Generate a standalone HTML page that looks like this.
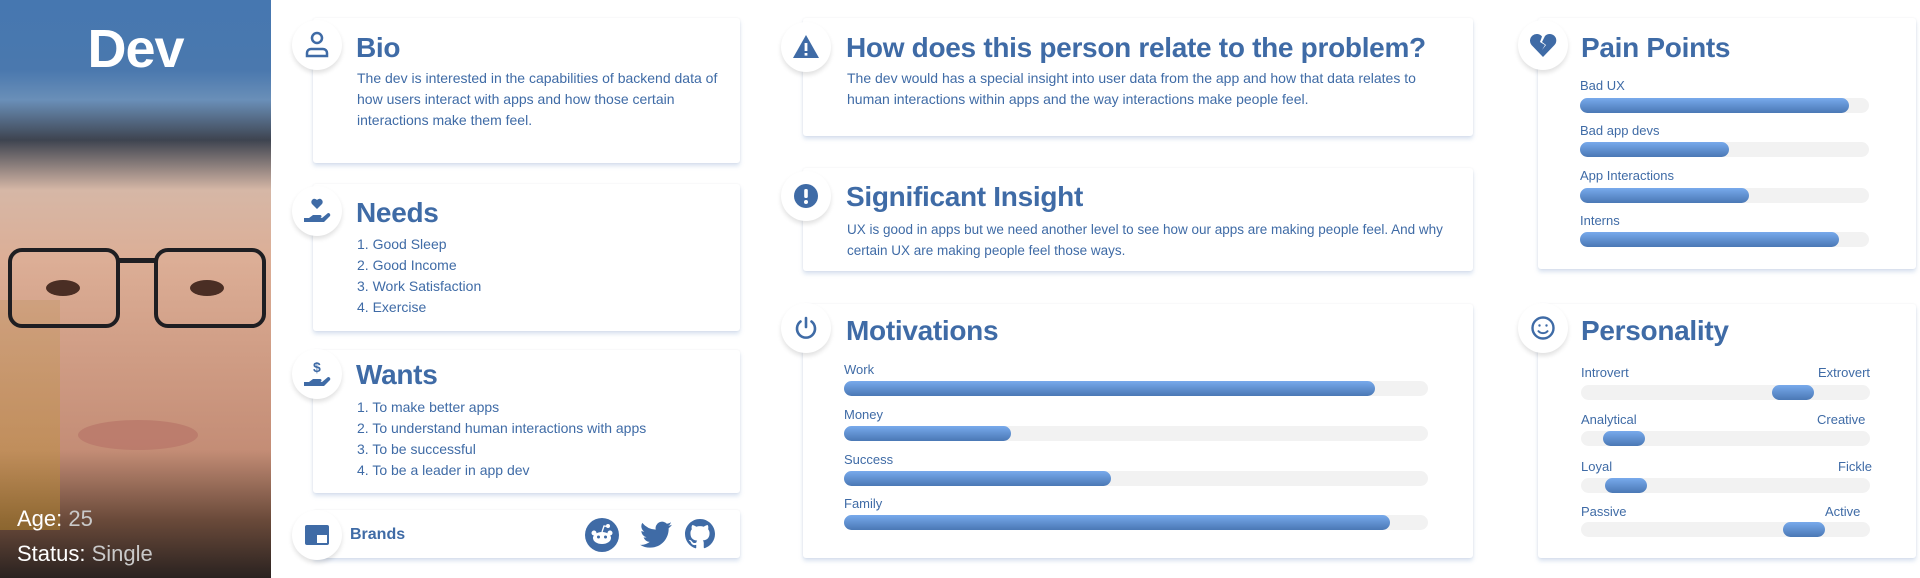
<!DOCTYPE html>
<html><head><meta charset="utf-8"><style>
*{margin:0;padding:0;box-sizing:border-box}
body{width:1920px;height:578px;background:#fff;position:relative;overflow:hidden;font-family:"Liberation Sans",sans-serif;color:#3f6ba6}
.abs{position:absolute}
.card{position:absolute;background:#fff;box-shadow:0 3px 4px rgba(120,150,200,.28),0 0 2px rgba(0,0,0,.06);border-radius:3px}
.ic{position:absolute;width:50px;height:50px;border-radius:50%;background:#fff;box-shadow:0 3px 5px rgba(0,0,0,.12);display:flex;align-items:center;justify-content:center}
.t{position:absolute;font-weight:bold;font-size:28px;color:#3f6ba6;letter-spacing:-.3px;line-height:30px}
.p{position:absolute;font-size:14px;line-height:21px;color:#3f6ba6;white-space:nowrap}
.lbl{position:absolute;font-size:13px;color:#3f6ba6;line-height:14px}
.tr{position:absolute;height:15px;border-radius:8px;background:#f2f2f2}
.fl{position:absolute;height:15px;border-radius:8px;background:linear-gradient(#78aaec,#4a78b5);top:0}
</style></head><body>
<div class="abs" style="left:0;top:0;width:271px;height:578px;overflow:hidden;background:linear-gradient(180deg,#4677b0 0px,#4a78ae 70px,#6a8fb8 100px,#3e4450 140px,#d6b7a6 190px,#dcae96 260px,#cf9c84 360px,#c48d76 450px,#6a4a3a 520px,#2a2220 578px)">
  <div class="abs" style="left:0;top:300px;width:60px;height:230px;background:linear-gradient(#c69a6e,#b8892a);opacity:.5"></div>
  <div class="abs" style="left:8px;top:248px;width:112px;height:80px;border:4px solid #1e1e22;border-radius:14px"></div>
  <div class="abs" style="left:154px;top:248px;width:112px;height:80px;border:4px solid #1e1e22;border-radius:14px"></div>
  <div class="abs" style="left:118px;top:258px;width:38px;height:5px;background:#1e1e22"></div>
  <div class="abs" style="left:46px;top:280px;width:34px;height:16px;border-radius:50%;background:#4a2e24"></div>
  <div class="abs" style="left:190px;top:280px;width:34px;height:16px;border-radius:50%;background:#4a2e24"></div>
  <div class="abs" style="left:78px;top:420px;width:120px;height:30px;border-radius:50%;background:#b9786a;opacity:.8"></div>
  <div class="abs" style="left:0;top:18px;width:271px;text-align:center;color:#fff;font-weight:bold;font-size:54px;letter-spacing:-1px">Dev</div>
  <div class="abs" style="left:17px;top:506px;color:#fff;font-size:22px">Age: <span style="color:#c9c9c9">25</span></div>
  <div class="abs" style="left:17px;top:541px;color:#fff;font-size:22px">Status: <span style="color:#c9c9c9">Single</span></div>
</div>

<div class="card" style="left:313px;top:18px;width:427px;height:145px"></div>
<div class="ic" style="left:292px;top:20px"><svg width="26" height="28" viewBox="0 0 26 28" fill="none" stroke="#3f6ba6" stroke-width="2.5"><circle cx="13" cy="7" r="5"/><path d="M3 25v-3a4 4 0 0 1 4-4h12a4 4 0 0 1 4 4v3z"/></svg></div>
<div class="t" style="left:356px;top:33px">Bio</div>
<div class="p" style="left:357px;top:68px">The dev is interested in the capabilities of backend data of<br>how users interact with apps and how those certain<br>interactions make them feel.</div>

<div class="card" style="left:313px;top:184px;width:427px;height:147px"></div>
<div class="ic" style="left:292px;top:186px"><svg width="28" height="28" viewBox="0 0 28 28" fill="#3f6ba6"><path d="M14 12 9 7a3 3 0 0 1 5-4 3 3 0 0 1 5 4z"/><path d="M1 21h5l4-3h7a1.5 1.5 0 0 1 0 3h-5h7l6-5a2 2 0 0 1 2 3l-6 6H1z"/></svg></div>
<div class="t" style="left:356px;top:198px">Needs</div>
<div class="p" style="left:357px;top:234px">1. Good Sleep<br>2. Good Income<br>3. Work Satisfaction<br>4. Exercise</div>

<div class="card" style="left:313px;top:350px;width:427px;height:143px"></div>
<div class="ic" style="left:292px;top:349px"><svg width="28" height="30" viewBox="0 0 28 30" fill="#3f6ba6"><text x="10" y="13" font-size="14" font-weight="bold" font-family="Liberation Sans">$</text><path d="M1 23h5l4-3h7a1.5 1.5 0 0 1 0 3h-5h7l6-5a2 2 0 0 1 2 3l-6 6H1z"/></svg></div>
<div class="t" style="left:356px;top:360px">Wants</div>
<div class="p" style="left:357px;top:397px">1. To make better apps<br>2. To understand human interactions with apps<br>3. To be successful<br>4. To be a leader in app dev</div>

<div class="card" style="left:313px;top:510px;width:427px;height:48px"></div>
<div class="ic" style="left:292px;top:510px"><svg width="26" height="24" viewBox="0 0 26 24"><rect x="1" y="2" width="24" height="20" rx="2" fill="#3f6ba6"/><rect x="13" y="12" width="10" height="8" fill="#fff"/></svg></div>
<div class="abs" style="left:350px;top:526px;font-weight:bold;font-size:16px">Brands</div>
<svg class="abs" style="left:585px;top:518px" width="34" height="34" viewBox="0 0 34 34"><circle cx="17" cy="17" r="17" fill="#3f6ba6"/><ellipse cx="17" cy="20" rx="9" ry="6" fill="#fff"/><circle cx="9" cy="15" r="2.5" fill="#fff"/><circle cx="25" cy="15" r="2.5" fill="#fff"/><circle cx="23" cy="8" r="2" fill="#fff"/><path d="M17 14l2-6 4 0.5" stroke="#fff" fill="none" stroke-width="1.3"/><circle cx="13.5" cy="19" r="1.5" fill="#3f6ba6"/><circle cx="20.5" cy="19" r="1.5" fill="#3f6ba6"/></svg>
<svg class="abs" style="left:640px;top:521px" width="32" height="28" viewBox="0 0 24 20"><path fill="#3f6ba6" d="M24 2.3a9.8 9.8 0 0 1-2.8.8A4.9 4.9 0 0 0 23.3.4a9.9 9.9 0 0 1-3.1 1.2A4.9 4.9 0 0 0 11.8 6 14 14 0 0 1 1.7.9a4.9 4.9 0 0 0 1.5 6.6A4.9 4.9 0 0 1 1 6.9a4.9 4.9 0 0 0 3.9 4.8 4.9 4.9 0 0 1-2.2.1 4.9 4.9 0 0 0 4.6 3.4A9.9 9.9 0 0 1 0 17.3a14 14 0 0 0 7.5 2.2c9.1 0 14-7.5 14-14v-.6A10 10 0 0 0 24 2.3z"/></svg>
<svg class="abs" style="left:685px;top:519px" width="30" height="30" viewBox="0 0 16 16"><path fill="#3f6ba6" d="M8 0C3.6 0 0 3.6 0 8c0 3.5 2.3 6.5 5.5 7.6.4.1.5-.2.5-.4v-1.4c-2.2.5-2.7-1-2.7-1-.4-.9-.9-1.2-.9-1.2-.7-.5.1-.5.1-.5.8.1 1.2.8 1.2.8.7 1.2 1.9.9 2.3.7.1-.5.3-.9.5-1.1-1.8-.2-3.6-.9-3.6-4 0-.9.3-1.6.8-2.1-.1-.2-.4-1 .1-2.1 0 0 .7-.2 2.2.8a7.5 7.5 0 0 1 4 0c1.5-1 2.2-.8 2.2-.8.4 1.1.2 1.9.1 2.1.5.6.8 1.3.8 2.1 0 3.1-1.9 3.7-3.6 3.9.3.3.5.8.5 1.5v2.2c0 .2.1.5.6.4A8 8 0 0 0 16 8c0-4.4-3.6-8-8-8z"/></svg>

<div class="card" style="left:803px;top:18px;width:670px;height:118px"></div>
<div class="ic" style="left:781px;top:22px"><svg width="28" height="26" viewBox="0 0 28 26"><path d="M14 1L27 24H1z" fill="#3f6ba6"/><rect x="12.6" y="9" width="2.8" height="8" fill="#fff"/><rect x="12.6" y="19" width="2.8" height="2.6" fill="#fff"/></svg></div>
<div class="t" style="left:846px;top:33px">How does this person relate to the problem?</div>
<div class="p" style="left:847px;top:68px">The dev would has a special insight into user data from the app and how that data relates to<br>human interactions within apps and the way interactions make people feel.</div>

<div class="card" style="left:803px;top:168px;width:670px;height:103px"></div>
<div class="ic" style="left:781px;top:171px"><svg width="26" height="26" viewBox="0 0 26 26"><circle cx="13" cy="13" r="12" fill="#3f6ba6"/><rect x="11.2" y="6" width="3.6" height="9" rx="1.5" fill="#fff"/><circle cx="13" cy="19" r="2" fill="#fff"/></svg></div>
<div class="t" style="left:846px;top:182px">Significant Insight</div>
<div class="p" style="left:847px;top:219px;font-size:13.5px">UX is good in apps but we need another level to see how our apps are making people feel. And why<br>certain UX are making people feel those ways.</div>

<div class="card" style="left:803px;top:304px;width:670px;height:254px"></div>
<div class="ic" style="left:781px;top:303px"><svg width="26" height="26" viewBox="0 0 26 26" fill="none" stroke="#3f6ba6" stroke-width="2.6" stroke-linecap="round"><path d="M13 3v9"/><path d="M7.5 6.5a9 9 0 1 0 11 0"/></svg></div>
<div class="t" style="left:846px;top:316px">Motivations</div>
<div class="lbl" style="left:844px;top:363px">Work</div>
<div class="tr" style="left:844px;top:381px;width:584px"><div class="fl" style="width:531px"></div></div>
<div class="lbl" style="left:844px;top:408px">Money</div>
<div class="tr" style="left:844px;top:426px;width:584px"><div class="fl" style="width:167px"></div></div>
<div class="lbl" style="left:844px;top:453px">Success</div>
<div class="tr" style="left:844px;top:471px;width:584px"><div class="fl" style="width:267px"></div></div>
<div class="lbl" style="left:844px;top:497px">Family</div>
<div class="tr" style="left:844px;top:515px;width:584px"><div class="fl" style="width:546px"></div></div>

<div class="card" style="left:1538px;top:18px;width:378px;height:251px"></div>
<div class="ic" style="left:1518px;top:20px"><svg width="28" height="26" viewBox="0 0 28 26"><path d="M14 25L2.5 13A6.5 6.5 0 0 1 13 4.5L11 10l5 3-3 5 4-5-4-3 3-6A6.5 6.5 0 0 1 25.5 13z" fill="#3f6ba6"/></svg></div>
<div class="t" style="left:1581px;top:33px">Pain Points</div>
<div class="lbl" style="left:1580px;top:79px">Bad UX</div>
<div class="tr" style="left:1580px;top:98px;width:289px"><div class="fl" style="width:269px"></div></div>
<div class="lbl" style="left:1580px;top:124px">Bad app devs</div>
<div class="tr" style="left:1580px;top:142px;width:289px"><div class="fl" style="width:149px"></div></div>
<div class="lbl" style="left:1580px;top:169px">App Interactions</div>
<div class="tr" style="left:1580px;top:188px;width:289px"><div class="fl" style="width:169px"></div></div>
<div class="lbl" style="left:1580px;top:214px">Interns</div>
<div class="tr" style="left:1580px;top:232px;width:289px"><div class="fl" style="width:259px"></div></div>

<div class="card" style="left:1538px;top:304px;width:378px;height:254px"></div>
<div class="ic" style="left:1518px;top:303px"><svg width="26" height="26" viewBox="0 0 26 26" fill="none" stroke="#3f6ba6" stroke-width="2.4"><circle cx="13" cy="13" r="10.5"/><circle cx="9.5" cy="10.5" r="1.2" fill="#3f6ba6" stroke="none"/><circle cx="16.5" cy="10.5" r="1.2" fill="#3f6ba6" stroke="none"/><path d="M8 15.5a6 6 0 0 0 10 0" stroke-width="2"/></svg></div>
<div class="t" style="left:1581px;top:316px">Personality</div>
<div class="lbl" style="left:1581px;top:366px">Introvert</div><div class="lbl" style="left:1818px;top:366px">Extrovert</div>
<div class="tr" style="left:1581px;top:385px;width:289px"><div class="fl" style="left:191px;width:42px"></div></div>
<div class="lbl" style="left:1581px;top:413px">Analytical</div><div class="lbl" style="left:1817px;top:413px">Creative</div>
<div class="tr" style="left:1581px;top:431px;width:289px"><div class="fl" style="left:22px;width:42px"></div></div>
<div class="lbl" style="left:1581px;top:460px">Loyal</div><div class="lbl" style="left:1838px;top:460px">Fickle</div>
<div class="tr" style="left:1581px;top:478px;width:289px"><div class="fl" style="left:24px;width:42px"></div></div>
<div class="lbl" style="left:1581px;top:505px">Passive</div><div class="lbl" style="left:1825px;top:505px">Active</div>
<div class="tr" style="left:1581px;top:522px;width:289px"><div class="fl" style="left:202px;width:42px"></div></div>
</body></html>
